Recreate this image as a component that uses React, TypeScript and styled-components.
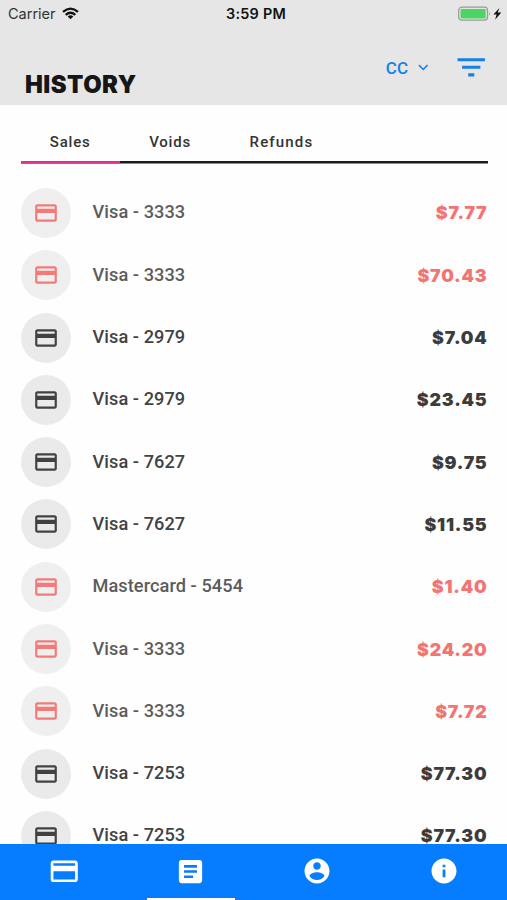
import React from "react";
import styled, { createGlobalStyle } from "styled-components";

const GlobalStyle = createGlobalStyle`
  * { box-sizing: border-box; }
  html, body { margin: 0; background: #fefefe; overflow: hidden; }
`;

const Screen = styled.div`
  width: 507px;
  height: 900px;
  display: flex;
  flex-direction: column;
  overflow: hidden;
  background: #fefefe;
  font-family: Roboto, sans-serif;
`;

const Header = styled.header`
  flex: none;
  height: 105px;
  background: #e6e6e6;
`;

const StatusBar = styled.div`
  height: 28px;
  padding: 0 5px 0 8px;
  display: grid;
  grid-template-columns: 1fr auto 1fr;
  align-items: center;
  font-family: Inter, sans-serif;
  color: #111;
`;

const Carrier = styled.div`
  display: flex;
  align-items: center;
  gap: 6px;
  padding-bottom: 1px;
  font-size: 14.5px;
  letter-spacing: 0;
  color: #333;
`;

const Clock = styled.div`
  font-size: 14.4px;
  font-weight: 600;
  letter-spacing: 0.25px;
  padding: 0 0 1px 2px;
`;

const Power = styled.div`
  display: flex;
  justify-content: flex-end;
  align-items: center;
  padding-bottom: 1px;
`;

const TitleBar = styled.div`
  height: 77px;
  padding: 0 17.5px 0 25px;
  display: flex;
  justify-content: space-between;
`;

const Title = styled.h1`
  margin: 42px 0 0;
  font: 900 23.8px/30px Inter, sans-serif;
  letter-spacing: 0.5px;
  color: #161616;
`;

const Actions = styled.div`
  display: flex;
  align-items: center;
  height: 78px;
  color: #1680e8;
`;

const TypeButton = styled.button`
  display: flex;
  align-items: center;
  gap: 9px;
  margin: 1px 25px 0 0;
  padding: 0;
  border: 0;
  background: none;
  color: inherit;
  font: 500 17px/22px Roboto, sans-serif;
  letter-spacing: 0.3px;
`;

const Tabs = styled.nav`
  flex: none;
  margin: 0 19.5px 0 20.5px;
  height: 58.5px;
  display: flex;
  background: linear-gradient(#1d1a1c, #1d1a1c) 0 56px / 100% 2.5px no-repeat;
`;

const Tab = styled.div<{ $active?: boolean }>`
  height: 58.5px;
  padding: 26px 29.3px 0;
  background: ${(p) => (p.$active ? "linear-gradient(#e22f94, #e22f94) 0 56px / 100% 2.5px no-repeat" : "none")};
  font: 500 15px/23px Roboto, sans-serif;
  letter-spacing: 0.8px;
  color: #333;

  &:last-child { letter-spacing: 1.15px; }
`;

const List = styled.main`
  flex: 1;
  min-height: 0;
  overflow: hidden;
  padding: 18.3px 19.5px 0 20.5px;
`;

const Row = styled.div<{ $refunded?: boolean }>`
  height: 62.3px;
  display: flex;
  align-items: center;
  color: ${(p) => (p.$refunded ? "#5c5c5c" : "#434343")};
`;

const Badge = styled.div<{ $refunded?: boolean }>`
  width: 50px;
  height: 50px;
  border-radius: 50%;
  display: flex;
  align-items: center;
  justify-content: center;
  background: ${(p) => (p.$refunded ? "#efefef" : "#eaeaea")};
  color: ${(p) => (p.$refunded ? "#f47a7a" : "#414141")};
`;

const Label = styled.div`
  flex: 1;
  padding: 0 0 1px 22px;
  font: 500 18.2px/24px Roboto, sans-serif;
  letter-spacing: 0.06px;
`;

const Amount = styled.div<{ $refunded?: boolean }>`
  padding-top: 1px;
  font: 900 17.8px/24px Inter, sans-serif;
  letter-spacing: 0.8px;
  color: ${(p) => (p.$refunded ? "#f47474" : "#3c3c3c")};
`;

const BottomNav = styled.nav`
  flex: none;
  height: 56px;
  display: grid;
  grid-template-columns: repeat(4, 1fr);
  background: #067dfe;
  color: #fff;
`;

const NavItem = styled.div<{ $active?: boolean }>`
  display: flex;
  align-items: center;
  justify-content: center;
  padding: 0 0 2px 1px;
  position: relative;
  &::after {
    content: "";
    display: ${(p) => (p.$active ? "block" : "none")};
    position: absolute;
    bottom: 0;
    width: 88px;
    height: 2.5px;
    background: #fff;
  }
`;

const paths = {
  card: "M20 4H4c-1.11 0-1.99.89-1.99 2L2 18c0 1.11.89 2 2 2h16c1.11 0 2-.89 2-2V6c0-1.11-.89-2-2-2zm0 14H4v-6h16v6zm0-10H4V6h16v2z",
  article:
    "M19 3H5c-1.1 0-2 .9-2 2v14c0 1.1.9 2 2 2h14c1.1 0 2-.9 2-2V5c0-1.1-.9-2-2-2zm-5 14H7v-2h7v2zm3-4H7v-2h10v2zm0-4H7V7h10v2z",
  account:
    "M12 2C6.48 2 2 6.48 2 12s4.48 10 10 10 10-4.48 10-10S17.52 2 12 2zm0 3c1.66 0 3 1.34 3 3s-1.34 3-3 3-3-1.34-3-3 1.34-3 3-3zm0 14.2c-2.5 0-4.71-1.28-6-3.22.03-1.99 4-3.08 6-3.08 1.99 0 5.97 1.09 6 3.08-1.29 1.94-3.5 3.22-6 3.22z",
  info: "M12 2C6.48 2 2 6.48 2 12s4.48 10 10 10 10-4.48 10-10S17.52 2 12 2zm1.1 15h-2.2v-6.2h2.2V17zm0-8h-2.2V7h2.2v2z",
  filter: "M10 18h4v-2h-4v2zM3 6v2h18V6H3zm3 7h12v-2H6v2z",
};

const Icon = ({ name, size }: { name: keyof typeof paths; size: number }) => (
  <svg width={size} height={size} viewBox="0 0 24 24" fill="currentColor">
    <path d={paths[name]} />
  </svg>
);

const WifiIcon = () => (
  <svg width="17" height="13" viewBox="0 0 17 13" fill="none" stroke="#111" strokeWidth="2.2">
    <path d="M1 4.8Q8.5-1.7 16 4.8M3.7 7.8Q8.5 3.7 13.3 7.8" />
    <path d="M8.5 12.3 5.7 9.4Q8.5 7.2 11.3 9.4Z" fill="#111" stroke="none" />
  </svg>
);

const BatteryIcon = () => (
  <svg width="44" height="16" viewBox="0 0 44 16">
    <rect x=".7" y="1.2" width="28.8" height="13" rx="3" fill="none" stroke="#999" strokeWidth="1.2" />
    <rect x="2.5" y="3" width="25.2" height="9.4" rx="1" fill="#4cd563" />
    <path d="M31 5.6q1.8 2.1 0 4.2z" fill="#999" />
    <path d="M41.4 1.9 35.4 8.5h3.2l-1.5 5.2 6.2-7.2h-3.6z" fill="#111" />
  </svg>
);

const ChevronIcon = () => (
  <svg width="10.5" height="8" viewBox="0 0 11 8" fill="none" stroke="currentColor" strokeWidth="1.6">
    <path d="M1 1 5.5 5.6 10 1" />
  </svg>
);

const sales: { label: string; amount: string; refunded?: boolean }[] = [
  { label: "Visa - 3333", amount: "$7.77", refunded: true },
  { label: "Visa - 3333", amount: "$70.43", refunded: true },
  { label: "Visa - 2979", amount: "$7.04" },
  { label: "Visa - 2979", amount: "$23.45" },
  { label: "Visa - 7627", amount: "$9.75" },
  { label: "Visa - 7627", amount: "$11.55" },
  { label: "Mastercard - 5454", amount: "$1.40", refunded: true },
  { label: "Visa - 3333", amount: "$24.20", refunded: true },
  { label: "Visa - 3333", amount: "$7.72", refunded: true },
  { label: "Visa - 7253", amount: "$77.30" },
  { label: "Visa - 7253", amount: "$77.30" },
];

export default function App() {
  return (
    <>
      <GlobalStyle />
      <Screen>
        <Header>
          <StatusBar>
            <Carrier>
              Carrier <WifiIcon />
            </Carrier>
            <Clock>3:59 PM</Clock>
            <Power>
              <BatteryIcon />
            </Power>
          </StatusBar>
          <TitleBar>
            <Title>HISTORY</Title>
            <Actions>
              <TypeButton>
                CC <ChevronIcon />
              </TypeButton>
              <Icon name="filter" size={36.5} />
            </Actions>
          </TitleBar>
        </Header>
        <Tabs>
          <Tab $active>Sales</Tab>
          <Tab>Voids</Tab>
          <Tab>Refunds</Tab>
        </Tabs>
        <List>
          {sales.map((sale, i) => (
            <Row key={i} $refunded={sale.refunded}>
              <Badge $refunded={sale.refunded}>
                <Icon name="card" size={26} />
              </Badge>
              <Label>{sale.label}</Label>
              <Amount $refunded={sale.refunded}>{sale.amount}</Amount>
            </Row>
          ))}
        </List>
        <BottomNav>
          <NavItem><Icon name="card" size={32.5} /></NavItem>
          <NavItem $active><Icon name="article" size={31} /></NavItem>
          <NavItem><Icon name="account" size={30} /></NavItem>
          <NavItem><Icon name="info" size={30} /></NavItem>
        </BottomNav>
      </Screen>
    </>
  );
}
